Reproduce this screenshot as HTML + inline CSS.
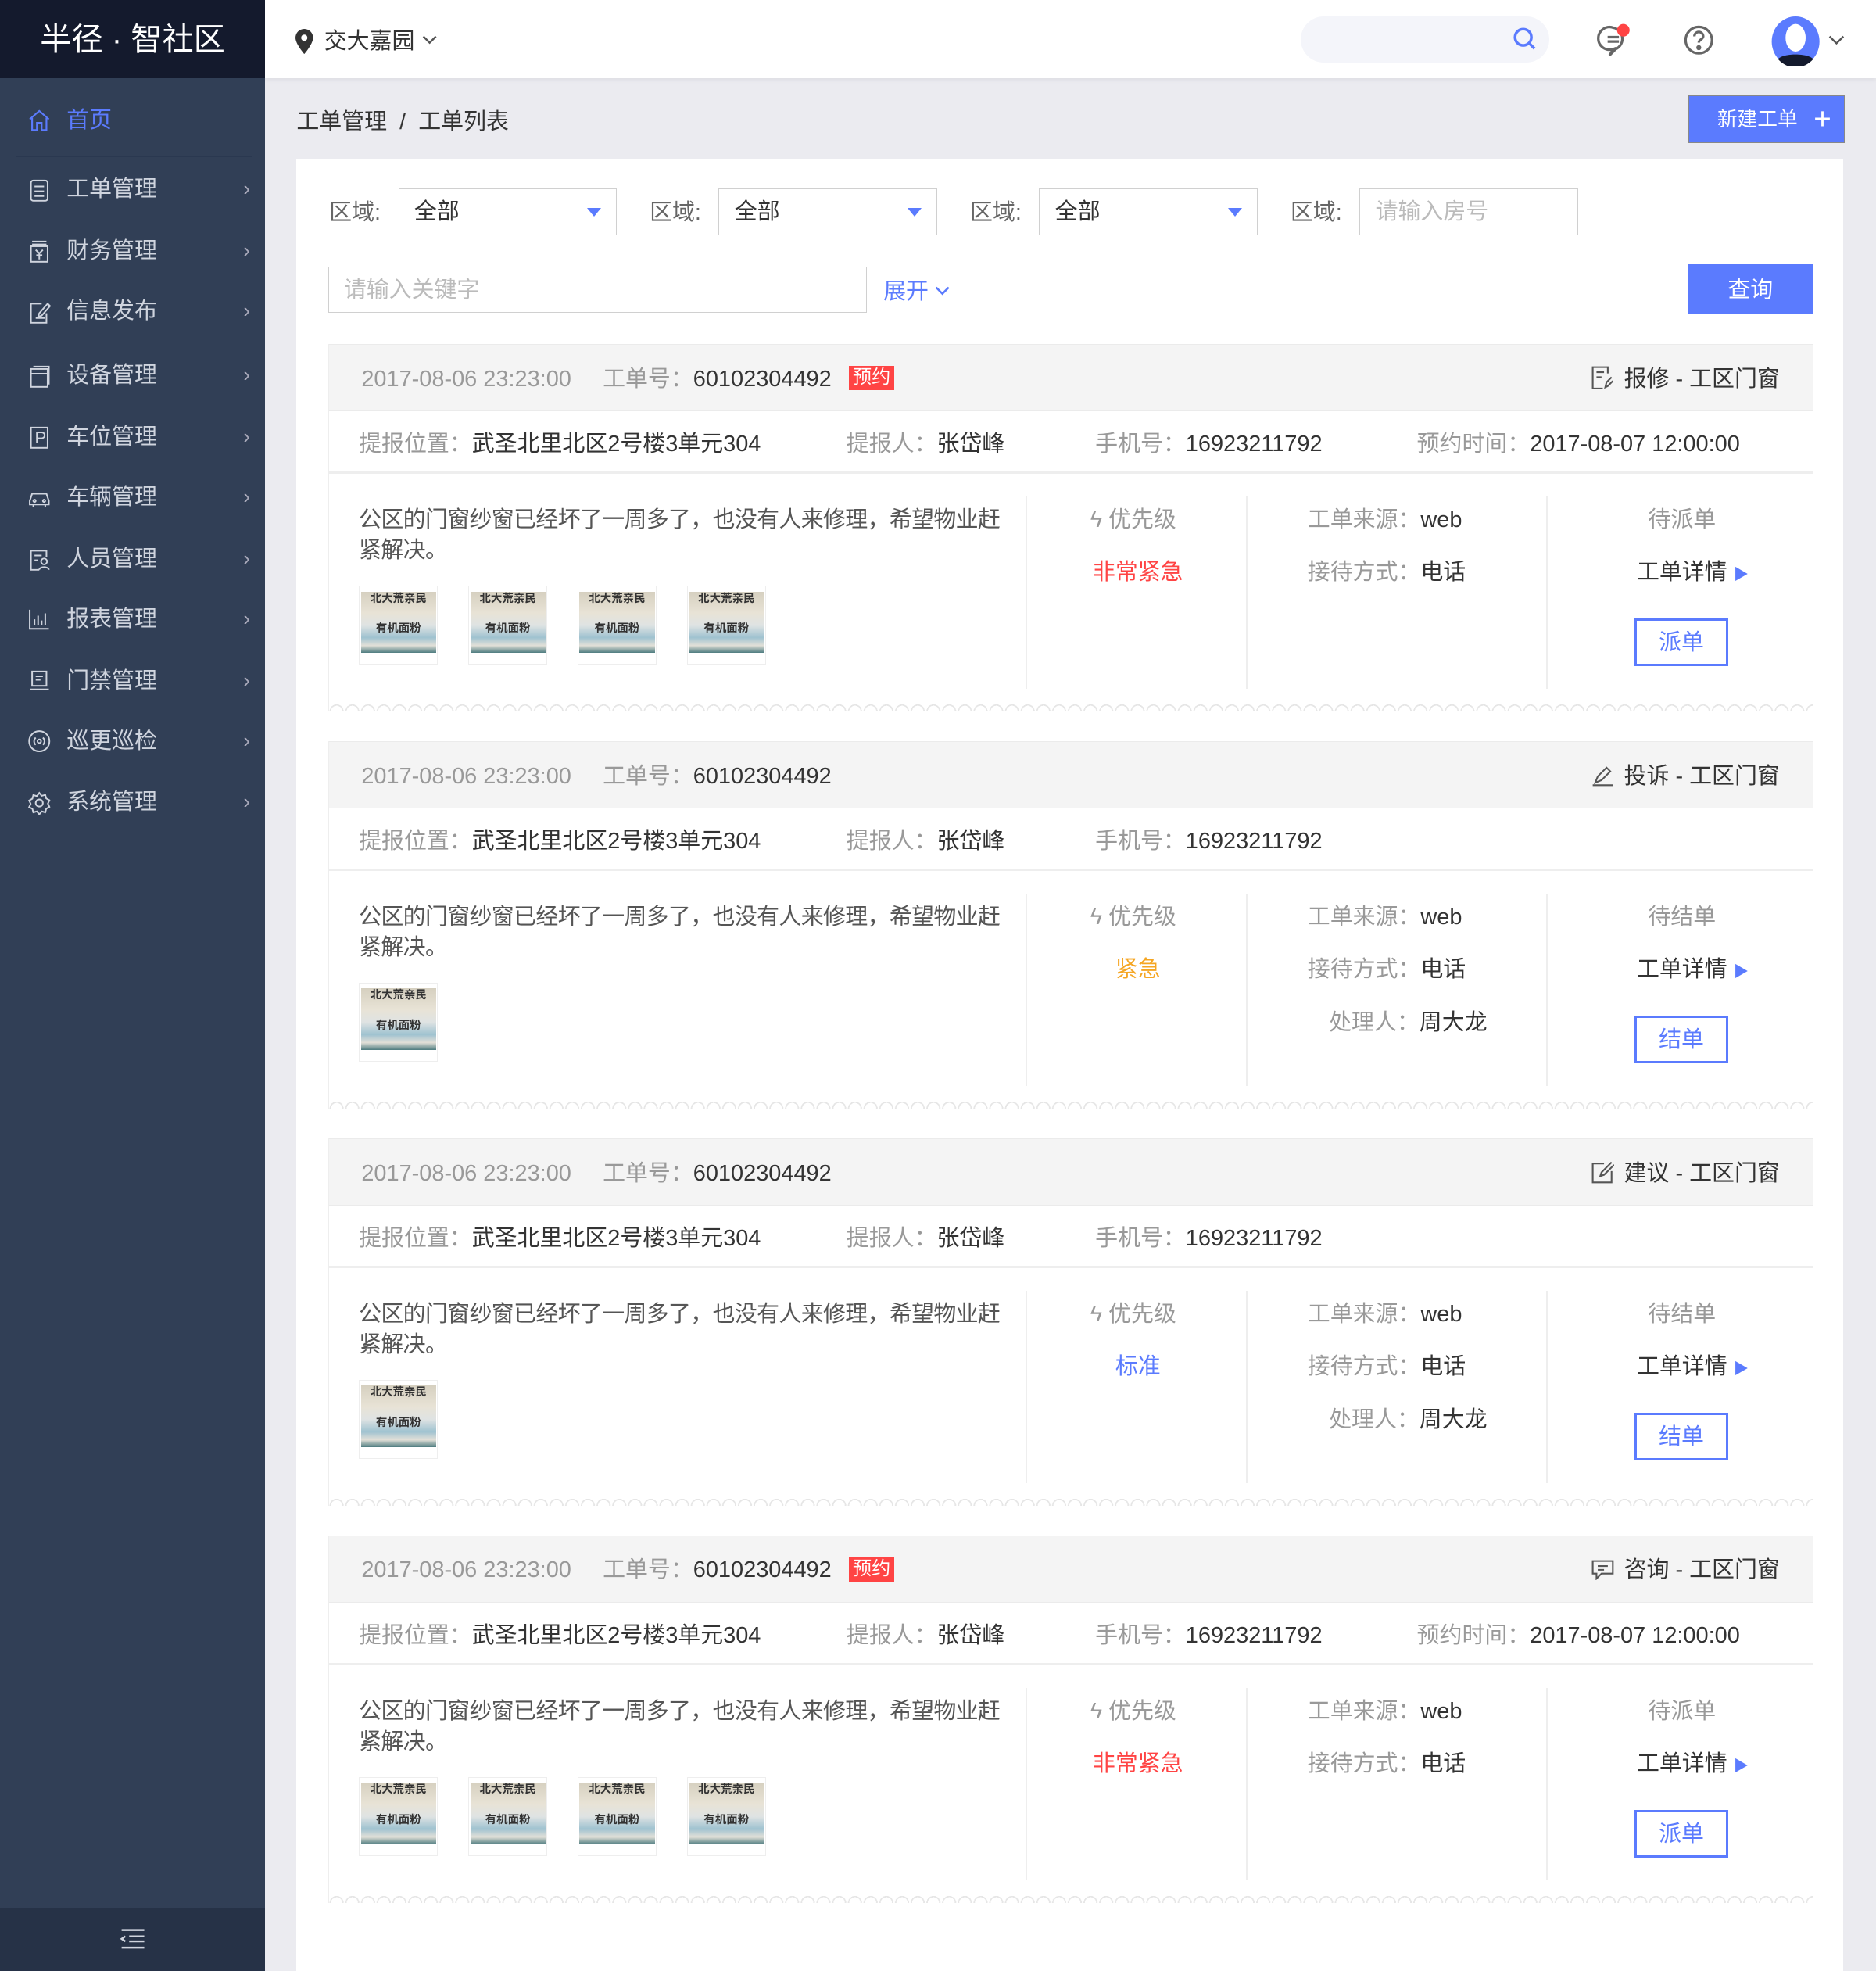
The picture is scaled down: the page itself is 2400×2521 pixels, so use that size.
<!DOCTYPE html>
<html><head><meta charset="utf-8">
<style>
*{margin:0;padding:0;box-sizing:border-box}
html,body{width:2400px;height:2520px;overflow:hidden}
body{zoom:1.6075;font-family:"Liberation Sans","Noto Sans CJK SC",sans-serif;background:#ebebf0;color:#333;font-size:18px;position:relative;width:1493px;height:1568px}
.abs{position:absolute}
#side{left:0;top:0;width:211px;height:1568px;background:#313f56}
#logo{left:0;top:0;width:211px;height:62px;background:#141a2d;color:#fff;font-size:25px;text-align:center;line-height:64px}
.mi{position:absolute;left:0;width:211px;height:40px;line-height:42px;color:#cfd4de;font-size:18px}
.mi .t{position:absolute;left:53px}
.mi .ic{position:absolute;left:22px;top:11px;width:19px;height:20px}
.mi .ar{position:absolute;right:12px;top:0;color:#aab;font-size:16px}
#top{left:211px;top:0;width:1282px;height:62px;background:#fff;box-shadow:0 2px 3px rgba(0,0,0,.05)}
.sel{position:absolute;height:37px;border:1px solid #d0d0d0;background:#fff;line-height:37px;padding-left:12px;color:#333}
.sel.dd:after{content:"";position:absolute;right:12px;top:15px;border-left:6px solid transparent;border-right:6px solid transparent;border-top:7px solid #5b7bfe}
.lbl{position:absolute;color:#666;line-height:39px}
.card{position:absolute;left:261px;width:1182px;height:292px;border-left:1px solid #eee;border-right:1px solid #eee}
.hd{position:absolute;left:0;top:0;width:100%;height:53px;background:#f4f4f4;border-top:1px solid #ebebeb;border-bottom:1px solid #ebebeb}
.info{position:absolute;left:0;top:53px;width:100%;height:50px;border-bottom:2px solid #eee}
.g{color:#999}
.txt{position:absolute;white-space:nowrap;line-height:26px}
.vd{position:absolute;top:121px;width:1px;height:153px;background:#eee}
.scal{position:absolute;left:0;bottom:0;width:100%;height:8px;background:radial-gradient(circle at 6px 8px,transparent 4.5px,#e6e6e6 4.5px,#e6e6e6 5.6px,transparent 5.6px) repeat-x;background-size:12.5px 8px}
.img{position:absolute;width:63px;height:63px;border:1px solid #eee;background:#fff;padding:4px 1px 9px}
.img div{width:100%;height:100%;background:linear-gradient(180deg,#d6d0c0 0%,#e8e3d6 35%,#dfe3e3 55%,#9fc2d0 75%,#e2e0d8 88%,#4e7c80 100%);position:relative;overflow:hidden;font-size:9px;color:#333;text-align:center;line-height:12px;font-weight:bold}
.tag{display:inline-block;background:#f44;color:#fff;font-size:15px;line-height:19px;padding:0 3px;margin-left:14px;vertical-align:2px}
.btn{position:absolute;width:75px;height:38px;border:2px solid #5b7bfe;color:#5b7bfe;text-align:center;line-height:36px}
.desc{position:absolute;left:24px;top:128px;color:#555;width:515px;line-height:24px;letter-spacing:-0.4px}
</style></head><body>

<div id="side" class="abs">
<div id="logo" class="abs">半径 · 智社区</div>
<div class="mi" style="top:75px;color:#5b7bfe"><svg class="ic" viewBox="0 0 20 20" fill="none" stroke="#5b7bfe" stroke-width="1.4"><path d="M2 9 L10 2 L18 9 M4 8 V18 H8 V12 H12 V18 H16 V8"/></svg><span class="t">首页</span></div>
<div class="abs" style="left:13px;top:124px;width:188px;height:1px;background:#2a3850"></div>
<div class="mi" style="top:130px"><svg class="ic" viewBox="0 0 20 20" fill="none" stroke="#cfd4de" stroke-width="1.3"><rect x="3" y="2" width="14" height="17" rx="2"/><path d="M6 7h8M6 11h8M6 15h8"/></svg><span class="t">工单管理</span><span class="ar">›</span></div>
<div class="mi" style="top:179px"><svg class="ic" viewBox="0 0 20 20" fill="none" stroke="#cfd4de" stroke-width="1.3"><path d="M4 2h12M4 4.5h12"/><rect x="3" y="6" width="14" height="13"/><path d="M7 9l3 3 3-3M10 12v5M7.5 13.5h5"/></svg><span class="t">财务管理</span><span class="ar">›</span></div>
<div class="mi" style="top:227px"><svg class="ic" viewBox="0 0 20 20" fill="none" stroke="#cfd4de" stroke-width="1.3"><path d="M12 3H3v16h13v-8M7 15h8M17 3l-7 8-1 3 3-1 7-8z"/></svg><span class="t">信息发布</span><span class="ar">›</span></div>
<div class="mi" style="top:278px"><svg class="ic" viewBox="0 0 20 20" fill="none" stroke="#cfd4de" stroke-width="1.3"><rect x="3" y="4" width="14" height="15"/><path d="M5 2h13v15M3 8h14"/></svg><span class="t">设备管理</span><span class="ar">›</span></div>
<div class="mi" style="top:327px"><svg class="ic" viewBox="0 0 20 20" fill="none" stroke="#cfd4de" stroke-width="1.3"><rect x="3" y="2" width="14" height="17"/><path d="M8 15V6h4a2.5 2.5 0 010 5H8"/></svg><span class="t">车位管理</span><span class="ar">›</span></div>
<div class="mi" style="top:375px"><svg class="ic" viewBox="0 0 20 20" fill="none" stroke="#cfd4de" stroke-width="1.3"><path d="M2 13l2-6h12l2 6v3H2z M5 16v2M15 16v2"/><circle cx="6" cy="13" r="1"/><circle cx="14" cy="13" r="1"/></svg><span class="t">车辆管理</span><span class="ar">›</span></div>
<div class="mi" style="top:424px"><svg class="ic" viewBox="0 0 20 20" fill="none" stroke="#cfd4de" stroke-width="1.3"><path d="M16 8V3H3v16h7M6 7h6M6 11h3"/><circle cx="14" cy="12" r="2.5"/><path d="M10 19c0-3 8-3 8 0"/></svg><span class="t">人员管理</span><span class="ar">›</span></div>
<div class="mi" style="top:472px"><svg class="ic" viewBox="0 0 20 20" fill="none" stroke="#cfd4de" stroke-width="1.3"><path d="M2 2v16h16M6 15V10M9 15V7M12 15v-4M15 15V5"/></svg><span class="t">报表管理</span><span class="ar">›</span></div>
<div class="mi" style="top:521px"><svg class="ic" viewBox="0 0 20 20" fill="none" stroke="#cfd4de" stroke-width="1.3"><rect x="4" y="2" width="12" height="12"/><path d="M2 17h16M7 6h6M7 9h4"/></svg><span class="t">门禁管理</span><span class="ar">›</span></div>
<div class="mi" style="top:569px"><svg class="ic" viewBox="0 0 20 20" fill="none" stroke="#cfd4de" stroke-width="1.3"><circle cx="10" cy="10" r="8.5"/><circle cx="10" cy="10" r="1.5"/><path d="M7 7a4 4 0 000 6M13 7a4 4 0 010 6"/></svg><span class="t">巡更巡检</span><span class="ar">›</span></div>
<div class="mi" style="top:618px"><svg class="ic" viewBox="0 0 20 20" fill="none" stroke="#cfd4de" stroke-width="1.3"><circle cx="10" cy="10" r="3"/><path d="M10 1.5l2 2.5 3-.8.8 3 2.7 1.5-1.3 2.8 1.3 2.8-2.7 1.5-.8 3-3-.8-2 2.5-2-2.5-3 .8-.8-3L1.5 13.5 2.8 10.7 1.5 7.9l2.7-1.5.8-3 3 .8z"/></svg><span class="t">系统管理</span><span class="ar">›</span></div>
<div class="abs" style="left:0;top:1518px;width:211px;height:50px;background:#263247"><svg class="abs" style="left:96px;top:17px" width="20" height="16" viewBox="0 0 20 16" fill="none" stroke="#cfd4de" stroke-width="1.5"><path d="M1 1h18M7 6h12M7 10h12M1 15h18M4 6l-3 2 3 2"/></svg></div>
</div>

<div id="top" class="abs">
<svg class="abs" style="left:24px;top:23px" width="14" height="20" viewBox="0 0 14 20"><path d="M7 0a7 7 0 00-7 7c0 5 7 13 7 13s7-8 7-13a7 7 0 00-7-7z" fill="#333"/><circle cx="7" cy="7" r="2.5" fill="#fff"/></svg>
<div class="abs" style="left:47px;top:21px;line-height:24px;font-size:18px;color:#333">交大嘉园</div>
<svg class="abs" style="left:125px;top:28px" width="12" height="8" viewBox="0 0 12 8" fill="none" stroke="#555" stroke-width="1.5"><path d="M1 1l5 5 5-5"/></svg>
<div class="abs" style="left:824px;top:13px;width:198px;height:37px;border-radius:19px;background:#f4f5fa"></div>
<svg class="abs" style="left:993px;top:21px" width="20" height="20" viewBox="0 0 20 20" fill="none" stroke="#5b7bfe" stroke-width="2.2"><circle cx="8.5" cy="8.5" r="6.5"/><path d="M13.5 13.5l4 4"/></svg>
<svg class="abs" style="left:1060px;top:18px" width="30" height="30" viewBox="0 0 30 30" fill="none" stroke="#666" stroke-width="2"><path d="M13 4a9 9 0 100 17l-3 5 5-5a9 9 0 00-2-17z"/><path d="M8.5 11.5h9M8.5 15h9"/><circle cx="21" cy="6" r="5" fill="#f44" stroke="none"/></svg>
<svg class="abs" style="left:1129px;top:20px" width="24" height="24" viewBox="0 0 24 24" fill="none" stroke="#666" stroke-width="2"><circle cx="12" cy="12" r="10.5"/><path d="M8.5 9a3.5 3.5 0 117 0c0 2.5-3.5 2.5-3.5 5"/><circle cx="12" cy="18" r="1" fill="#666"/></svg>
<svg class="abs" style="left:1198px;top:13px" width="40" height="40" viewBox="0 0 40 40"><ellipse cx="20" cy="20" rx="19" ry="20" fill="#5b7bfe"/><ellipse cx="20" cy="17" rx="8" ry="11" fill="#fff"/><path d="M6 34c4-5 24-5 28 0a19 20 0 01-28 0z" fill="#141a2d"/></svg>
<svg class="abs" style="left:1244px;top:28px" width="13" height="8" viewBox="0 0 13 8" fill="none" stroke="#555" stroke-width="1.5"><path d="M1 1l5.5 5.5 5.5-5.5"/></svg>
</div>

<div class="abs" style="left:236px;top:85px;line-height:24px;font-size:18px;color:#333">工单管理&nbsp;&nbsp;/&nbsp;&nbsp;工单列表</div>
<div class="abs" style="left:1344px;top:76px;width:124px;height:38px;background:#5b7bfe;border:1px solid #888;color:#fff;font-size:16px;line-height:38px;padding-left:22px">新建工单<span style="position:absolute;right:10px;font-size:24px;top:-1px">+</span></div>

<div class="abs" style="left:236px;top:126px;width:1231px;height:1442px;background:#fff"></div>

<div class="lbl" style="left:262px;top:150px">区域:</div><div class="sel dd" style="left:317px;top:150px;width:174px">全部</div>
<div class="lbl" style="left:517px;top:150px">区域:</div><div class="sel dd" style="left:572px;top:150px;width:174px">全部</div>
<div class="lbl" style="left:772px;top:150px">区域:</div><div class="sel dd" style="left:827px;top:150px;width:174px">全部</div>
<div class="lbl" style="left:1027px;top:150px">区域:</div><div class="sel" style="left:1082px;top:150px;width:174px;color:#bbb">请输入房号</div>
<div class="sel" style="left:261px;top:212px;width:429px;color:#bbb">请输入关键字</div>
<div class="abs" style="left:703px;top:220px;color:#5b7bfe;line-height:24px">展开 <svg width="12" height="8" viewBox="0 0 12 8" fill="none" stroke="#5b7bfe" stroke-width="1.6" style="vertical-align:2px"><path d="M1 1l5 5 5-5"/></svg></div>
<div class="abs" style="left:1343px;top:210px;width:100px;height:40px;background:#5b7bfe;color:#fff;text-align:center;line-height:42px">查询</div>

<!-- CARD 1 -->
<div class="card" style="top:274px">
<div class="hd"></div>
<div class="txt g" style="left:26px;top:15px">2017-08-06 23:23:00&nbsp;&nbsp;&nbsp;&nbsp;&nbsp;工单号：<span style="color:#333">60102304492</span><span class="tag">预约</span></div>
<div class="txt" style="right:26px;top:15px"><svg width="18" height="19" viewBox="0 0 18 19" fill="none" stroke="#555" stroke-width="1.3" style="vertical-align:-3px;margin-right:8px"><path d="M13 6V1H1v17h8M4 5h6M4 9h4"/><path d="M16 9l-4 4-1 4 2-1 4-4"/></svg>报修 - 工区门窗</div>
<div class="info"></div>
<div class="txt" style="left:24px;top:67px"><span class="g">提报位置：</span>武圣北里北区2号楼3单元304</div>
<div class="txt" style="left:412px;top:67px"><span class="g">提报人：</span>张岱峰</div>
<div class="txt" style="left:610px;top:67px"><span class="g">手机号：</span>16923211792</div>
<div class="txt" style="left:866px;top:67px"><span class="g">预约时间：</span>2017-08-07 12:00:00</div>
<div class="desc">公区的门窗纱窗已经坏了一周多了，也没有人来修理，希望物业赶紧解决。</div>
<div class="img" style="left:24px;top:192px"><div>北大荒亲民<br><br>有机面粉</div></div>
<div class="img" style="left:111px;top:192px"><div>北大荒亲民<br><br>有机面粉</div></div>
<div class="img" style="left:198px;top:192px"><div>北大荒亲民<br><br>有机面粉</div></div>
<div class="img" style="left:285px;top:192px"><div>北大荒亲民<br><br>有机面粉</div></div>
<div class="vd" style="left:555px"></div><div class="vd" style="left:730px"></div><div class="vd" style="left:969px"></div>
<div class="txt g" style="left:606px;top:127px">ϟ 优先级</div>
<div class="txt" style="left:608px;top:169px;color:#f44">非常紧急</div>
<div class="txt" style="left:779px;top:127px"><span class="g">工单来源：</span>web</div>
<div class="txt" style="left:779px;top:169px"><span class="g">接待方式：</span>电话</div>
<div class="txt g" style="left:1050px;top:127px">待派单</div>
<div class="txt" style="left:1041px;top:169px">工单详情 <span style="color:#5b7bfe;font-size:12px">▶</span></div>
<div class="btn" style="left:1039px;top:218px">派单</div>
<div class="scal"></div>
</div>

<!-- CARD 2 -->
<div class="card" style="top:590px">
<div class="hd"></div>
<div class="txt g" style="left:26px;top:15px">2017-08-06 23:23:00&nbsp;&nbsp;&nbsp;&nbsp;&nbsp;工单号：<span style="color:#333">60102304492</span></div>
<div class="txt" style="right:26px;top:15px"><svg width="18" height="18" viewBox="0 0 18 18" fill="none" stroke="#555" stroke-width="1.3" style="vertical-align:-3px;margin-right:8px"><path d="M1 17h16M3 15l2-5 7-7 3 3-7 7z"/></svg>投诉 - 工区门窗</div>
<div class="info"></div>
<div class="txt" style="left:24px;top:67px"><span class="g">提报位置：</span>武圣北里北区2号楼3单元304</div>
<div class="txt" style="left:412px;top:67px"><span class="g">提报人：</span>张岱峰</div>
<div class="txt" style="left:610px;top:67px"><span class="g">手机号：</span>16923211792</div>
<div class="desc">公区的门窗纱窗已经坏了一周多了，也没有人来修理，希望物业赶紧解决。</div>
<div class="img" style="left:24px;top:192px"><div>北大荒亲民<br><br>有机面粉</div></div>
<div class="vd" style="left:555px"></div><div class="vd" style="left:730px"></div><div class="vd" style="left:969px"></div>
<div class="txt g" style="left:606px;top:127px">ϟ 优先级</div>
<div class="txt" style="left:626px;top:169px;color:#f5a623">紧急</div>
<div class="txt" style="left:779px;top:127px"><span class="g">工单来源：</span>web</div>
<div class="txt" style="left:779px;top:169px"><span class="g">接待方式：</span>电话</div>
<div class="txt" style="left:796px;top:211px"><span class="g">处理人：</span>周大龙</div>
<div class="txt g" style="left:1050px;top:127px">待结单</div>
<div class="txt" style="left:1041px;top:169px">工单详情 <span style="color:#5b7bfe;font-size:12px">▶</span></div>
<div class="btn" style="left:1039px;top:218px">结单</div>
<div class="scal"></div>
</div>

<!-- CARD 3 -->
<div class="card" style="top:906px">
<div class="hd"></div>
<div class="txt g" style="left:26px;top:15px">2017-08-06 23:23:00&nbsp;&nbsp;&nbsp;&nbsp;&nbsp;工单号：<span style="color:#333">60102304492</span></div>
<div class="txt" style="right:26px;top:15px"><svg width="18" height="18" viewBox="0 0 18 18" fill="none" stroke="#555" stroke-width="1.3" style="vertical-align:-3px;margin-right:8px"><path d="M10 2H1v15h15V8M16 1L8 9l-1 3 3-1 8-8"/></svg>建议 - 工区门窗</div>
<div class="info"></div>
<div class="txt" style="left:24px;top:67px"><span class="g">提报位置：</span>武圣北里北区2号楼3单元304</div>
<div class="txt" style="left:412px;top:67px"><span class="g">提报人：</span>张岱峰</div>
<div class="txt" style="left:610px;top:67px"><span class="g">手机号：</span>16923211792</div>
<div class="desc">公区的门窗纱窗已经坏了一周多了，也没有人来修理，希望物业赶紧解决。</div>
<div class="img" style="left:24px;top:192px"><div>北大荒亲民<br><br>有机面粉</div></div>
<div class="vd" style="left:555px"></div><div class="vd" style="left:730px"></div><div class="vd" style="left:969px"></div>
<div class="txt g" style="left:606px;top:127px">ϟ 优先级</div>
<div class="txt" style="left:626px;top:169px;color:#5b7bfe">标准</div>
<div class="txt" style="left:779px;top:127px"><span class="g">工单来源：</span>web</div>
<div class="txt" style="left:779px;top:169px"><span class="g">接待方式：</span>电话</div>
<div class="txt" style="left:796px;top:211px"><span class="g">处理人：</span>周大龙</div>
<div class="txt g" style="left:1050px;top:127px">待结单</div>
<div class="txt" style="left:1041px;top:169px">工单详情 <span style="color:#5b7bfe;font-size:12px">▶</span></div>
<div class="btn" style="left:1039px;top:218px">结单</div>
<div class="scal"></div>
</div>

<!-- CARD 4 -->
<div class="card" style="top:1222px">
<div class="hd"></div>
<div class="txt g" style="left:26px;top:15px">2017-08-06 23:23:00&nbsp;&nbsp;&nbsp;&nbsp;&nbsp;工单号：<span style="color:#333">60102304492</span><span class="tag">预约</span></div>
<div class="txt" style="right:26px;top:15px"><svg width="18" height="16" viewBox="0 0 18 16" fill="none" stroke="#555" stroke-width="1.3" style="vertical-align:-2px;margin-right:8px"><path d="M1 1h16v10H8l-4 4v-4H1z M5 5h8M5 8h5"/></svg>咨询 - 工区门窗</div>
<div class="info"></div>
<div class="txt" style="left:24px;top:67px"><span class="g">提报位置：</span>武圣北里北区2号楼3单元304</div>
<div class="txt" style="left:412px;top:67px"><span class="g">提报人：</span>张岱峰</div>
<div class="txt" style="left:610px;top:67px"><span class="g">手机号：</span>16923211792</div>
<div class="txt" style="left:866px;top:67px"><span class="g">预约时间：</span>2017-08-07 12:00:00</div>
<div class="desc">公区的门窗纱窗已经坏了一周多了，也没有人来修理，希望物业赶紧解决。</div>
<div class="img" style="left:24px;top:192px"><div>北大荒亲民<br><br>有机面粉</div></div>
<div class="img" style="left:111px;top:192px"><div>北大荒亲民<br><br>有机面粉</div></div>
<div class="img" style="left:198px;top:192px"><div>北大荒亲民<br><br>有机面粉</div></div>
<div class="img" style="left:285px;top:192px"><div>北大荒亲民<br><br>有机面粉</div></div>
<div class="vd" style="left:555px"></div><div class="vd" style="left:730px"></div><div class="vd" style="left:969px"></div>
<div class="txt g" style="left:606px;top:127px">ϟ 优先级</div>
<div class="txt" style="left:608px;top:169px;color:#f44">非常紧急</div>
<div class="txt" style="left:779px;top:127px"><span class="g">工单来源：</span>web</div>
<div class="txt" style="left:779px;top:169px"><span class="g">接待方式：</span>电话</div>
<div class="txt g" style="left:1050px;top:127px">待派单</div>
<div class="txt" style="left:1041px;top:169px">工单详情 <span style="color:#5b7bfe;font-size:12px">▶</span></div>
<div class="btn" style="left:1039px;top:218px">派单</div>
<div class="scal"></div>
</div>

</body></html>
